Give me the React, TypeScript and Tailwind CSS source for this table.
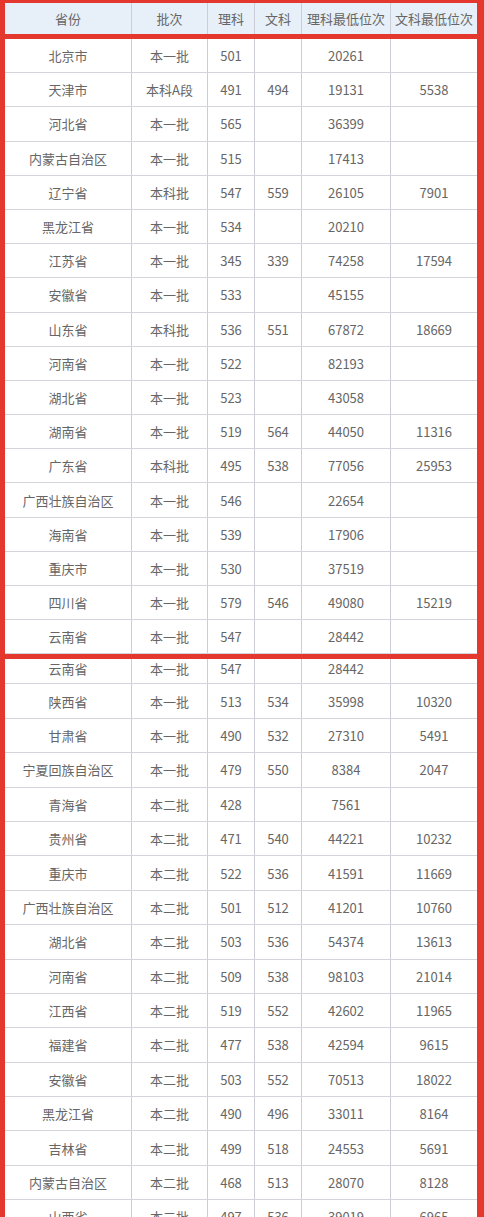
const COLS = ["w-[127px]", "w-[76px]", "w-[47px]", "w-[47px]", "w-[89px]", "w-[86px]"];

const HEAD = ["省份", "批次", "理科", "文科", "理科最低位次", "文科最低位次"];

const PART_ONE: string[][] = [
  ["北京市", "本一批", "501", "", "20261", ""],
  ["天津市", "本科A段", "491", "494", "19131", "5538"],
  ["河北省", "本一批", "565", "", "36399", ""],
  ["内蒙古自治区", "本一批", "515", "", "17413", ""],
  ["辽宁省", "本科批", "547", "559", "26105", "7901"],
  ["黑龙江省", "本一批", "534", "", "20210", ""],
  ["江苏省", "本一批", "345", "339", "74258", "17594"],
  ["安徽省", "本一批", "533", "", "45155", ""],
  ["山东省", "本科批", "536", "551", "67872", "18669"],
  ["河南省", "本一批", "522", "", "82193", ""],
  ["湖北省", "本一批", "523", "", "43058", ""],
  ["湖南省", "本一批", "519", "564", "44050", "11316"],
  ["广东省", "本科批", "495", "538", "77056", "25953"],
  ["广西壮族自治区", "本一批", "546", "", "22654", ""],
  ["海南省", "本一批", "539", "", "17906", ""],
  ["重庆市", "本一批", "530", "", "37519", ""],
  ["四川省", "本一批", "579", "546", "49080", "15219"],
  ["云南省", "本一批", "547", "", "28442", ""],
];

const PART_TWO: string[][] = [
  ["陕西省", "本一批", "513", "534", "35998", "10320"],
  ["甘肃省", "本一批", "490", "532", "27310", "5491"],
  ["宁夏回族自治区", "本一批", "479", "550", "8384", "2047"],
  ["青海省", "本二批", "428", "", "7561", ""],
  ["贵州省", "本二批", "471", "540", "44221", "10232"],
  ["重庆市", "本二批", "522", "536", "41591", "11669"],
  ["广西壮族自治区", "本二批", "501", "512", "41201", "10760"],
  ["湖北省", "本二批", "503", "536", "54374", "13613"],
  ["河南省", "本二批", "509", "538", "98103", "21014"],
  ["江西省", "本二批", "519", "552", "42602", "11965"],
  ["福建省", "本二批", "477", "538", "42594", "9615"],
  ["安徽省", "本二批", "503", "552", "70513", "18022"],
  ["黑龙江省", "本二批", "490", "496", "33011", "8164"],
  ["吉林省", "本二批", "499", "518", "24553", "5691"],
  ["内蒙古自治区", "本二批", "468", "513", "28070", "8128"],
  ["山西省", "本二批", "497", "536", "39019", "6965"],
];

function Cells({ cells }: { cells: string[] }) {
  return (
    <>
      {cells.map((c, i) => (
        <div
          key={i}
          className={`${COLS[i]} h-full shrink-0 flex items-center justify-center leading-none ${i < 5 ? "border-r border-[#cdcdd8]" : ""}`}
        >
          {c}
        </div>
      ))}
    </>
  );
}

function Row({ cells, tall = "h-[34.2px]" }: { cells: string[]; tall?: string }) {
  return (
    <div className={`flex ${tall} border-b border-[#d4d4dc] shrink-0`}>
      <Cells cells={cells} />
    </div>
  );
}

export default function App() {
  return (
    <div
      className="w-[484px] h-[1217px] overflow-hidden bg-[#e4382f] pl-[5px] pr-[7px] pt-[3px] flex flex-col gap-[5px] text-[13px] text-[#666]"
      style={{ fontFamily: '"Microsoft YaHei", "Noto Sans CJK SC", "Noto Sans", sans-serif' }}
    >
      {/* 表头 */}
      <div className="flex h-[31px] bg-[#e7f0f9] shrink-0">
        <Cells cells={HEAD} />
      </div>

      {/* 第一段 */}
      <div className="bg-white flex flex-col shrink-0">
        {PART_ONE.map((r, i) => (
          <Row key={i} cells={r} />
        ))}
      </div>

      {/* 第二段（截图拼接，首行被裁） */}
      <div className="bg-white flex flex-col flex-1 overflow-hidden">
        <div className="h-[25px] overflow-hidden border-b border-[#d4d4dc] shrink-0">
          <div className="flex h-[34px] -mt-[8px]">
            <Cells cells={["云南省", "本一批", "547", "", "28442", ""]} />
          </div>
        </div>
        {PART_TWO.map((r, i) => (
          <Row key={i} cells={r} tall="h-[34.4px]" />
        ))}
      </div>
    </div>
  );
}
